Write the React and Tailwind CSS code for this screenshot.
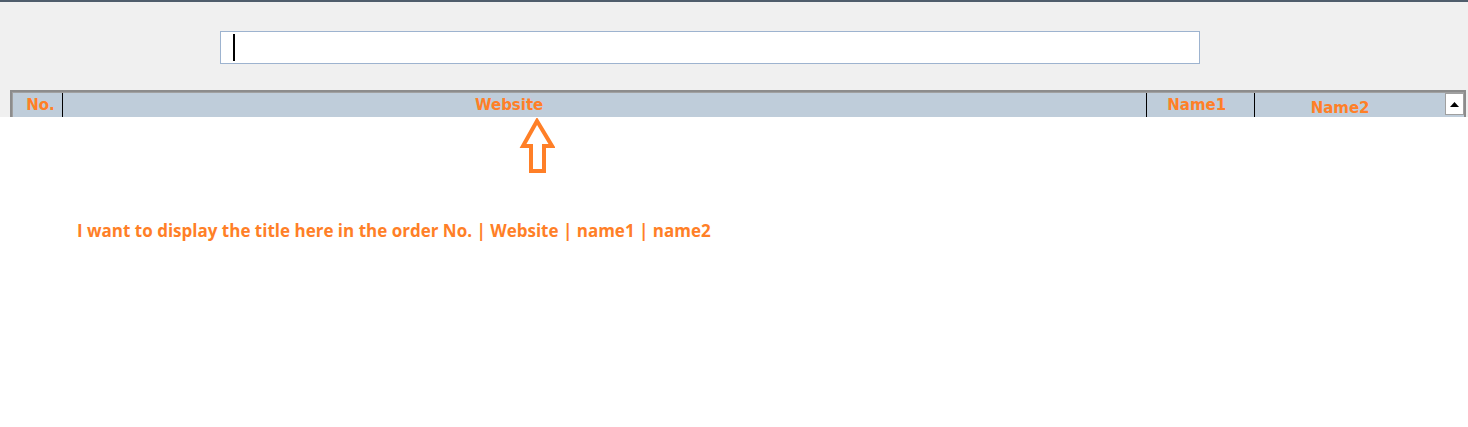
export default function App() {
  return (
    <div className="relative h-[427px] w-[1468px] overflow-hidden bg-white font-['DejaVu_Sans',sans-serif]">
      <div className="h-[117px] overflow-hidden border-t-2 border-[#4f5d6c] bg-[#f0f0f0]">
        <div className="pl-[220px] pt-[29px]">
          <div className="flex h-[33px] w-[980px] items-center border border-[#9db3cf] bg-white pl-[12px]">
            <span className="block h-[27px] w-[2px] bg-black" />
          </div>
        </div>
        <div className="ml-[10px] mt-[26px] h-[27px] w-[1456px] border-x-2 border-t-2 border-[#8c8c8c] bg-[#bfcdda]">
          <div className="flex h-full border-l border-t border-[#a0a0a0] text-[15px] font-bold text-[#ff7f27]">
            <div className="flex w-[50px] items-start justify-center border-r border-black pl-[6px] pt-[1px]">No.</div>
            <div className="flex w-[1085px] items-start border-r border-black pl-[412px] pt-[1px]">Website</div>
            <div className="flex w-[108px] items-start justify-center border-r border-black pr-[8px] pt-[1px]">Name1</div>
            <div className="flex w-[190px] items-start justify-center pr-[20px] pt-[4px]">Name2</div>
            <div className="flex h-[22px] w-[19px] items-center justify-center border border-[#a0a0a0] bg-white">
              <svg width="9" height="5" viewBox="0 0 9 5">
                <path d="M0 5 L4.5 0 L9 5 Z" fill="black" />
              </svg>
            </div>
          </div>
        </div>
      </div>
      <svg className="absolute left-[519px] top-[118px]" width="36" height="58" viewBox="0 0 36 58">
        <path
          d="M18 3 L33 28 L25 28 L25 53 L12 53 L12 28 L4 28 Z"
          fill="none"
          stroke="#ff7f27"
          strokeWidth="4"
          strokeLinejoin="miter"
        />
      </svg>
      <p className="ml-[77px] mt-[101px] font-['Open_Sans',sans-serif] text-[17px] font-bold text-[#ff7f27]">
        I want to display the title here in the order No. | Website | name1 | name2
      </p>
    </div>
  );
}
